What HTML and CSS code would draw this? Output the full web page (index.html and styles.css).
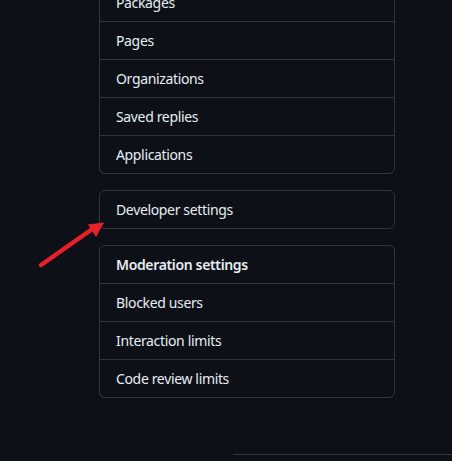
FILE: index.html
```html
<!DOCTYPE html>
<html lang="en">
<head>
<meta charset="utf-8">
<link rel="stylesheet" href="styles.css">
</head>
<body>
<div class="page">
  <nav class="menu menu-first">
    <a class="item">Packages</a>
    <a class="item">Pages</a>
    <a class="item">Organizations</a>
    <a class="item">Saved replies</a>
    <a class="item">Applications</a>
  </nav>
  <nav class="menu">
    <a class="item">Developer settings</a>
  </nav>
  <nav class="menu">
    <div class="item heading">Moderation settings</div>
    <a class="item">Blocked users</a>
    <a class="item">Interaction limits</a>
    <a class="item">Code review limits</a>
  </nav>
  <div class="footer"></div>
</div>
<svg class="arrow" width="120" height="60" viewBox="0 0 120 60">
  <line x1="41" y1="55" x2="93" y2="18.5" stroke="#e8202a" stroke-width="4.5" stroke-linecap="round"/>
  <polygon points="104,12.5 88,14.5 96,27" fill="#e8202a"/>
</svg>
</body>
</html>
```
FILE: styles.css
```css
html, body {
  margin: 0;
  padding: 0;
  background: #0d1117;
}
body {
  font-family: "Noto Sans", "Liberation Sans", sans-serif;
  font-size: 14px;
  letter-spacing: -0.35px;
  color: #e6edf3;
  height: 461px;
  overflow: hidden;
  position: relative;
}
.page {
  display: flex;
  flex-direction: column;
  gap: 16px;
  margin-top: -17px;
  padding-left: 99px;
}
.menu {
  width: 294px;
  border: 1px solid #30363d;
  border-radius: 6px;
  display: flex;
  flex-direction: column;
}
.item {
  height: 37px;
  display: flex;
  align-items: center;
  padding: 0 16px;
  border-top: 1px solid #30363d;
  color: #e6edf3;
  text-decoration: none;
}
.item:first-child {
  border-top: none;
}
.heading {
  font-weight: 600;
}
.footer {
  margin-top: 40px;
  margin-left: 134px;
  border-top: 1px solid #30363d;
  height: 10px;
}
.arrow {
  position: absolute;
  left: 0;
  top: 210px;
}
```
